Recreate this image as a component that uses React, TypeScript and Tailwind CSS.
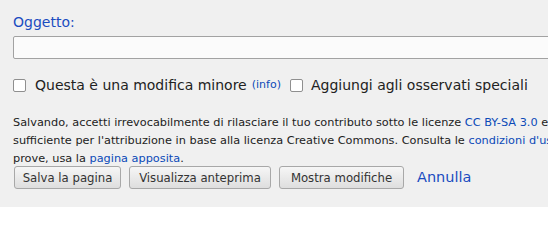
export default function App() {
  return (
    <div className="h-[207px] w-[548px] overflow-hidden bg-[#f0f0f0] pl-[13px] pt-[13px] font-['DejaVu_Sans',sans-serif] text-[#222]">
      <label className="block text-[14px] leading-[18px] text-[#1a4cc0]">Oggetto:</label>
      <div className="mt-[5px] h-[23px] w-[560px] rounded-[2px] border border-[#a2a2a2] bg-[#fbfbfb]" />

      <div className="mt-[17px] flex items-center text-[14px] leading-[18px]">
        <span className="h-[13px] w-[13px] rounded-[2px] border border-[#8f8f8f] bg-white" />
        <span className="ml-[9px]">Questa è una modifica minore</span>
        <span className="ml-[5px] text-[11px] text-[#0b4ab8]">(info)</span>
        <span className="ml-[9px] h-[13px] w-[13px] rounded-[2px] border border-[#8f8f8f] bg-white" />
        <span className="ml-[8px] whitespace-nowrap">Aggiungi agli osservati speciali</span>
      </div>

      <p className="mt-[20px] w-[600px] text-[11.3px] leading-[18px]">
        Salvando, accetti irrevocabilmente di rilasciare il tuo contributo sotto le licenze{" "}
        <span className="text-[#0b4ab8]">CC BY-SA 3.0</span> e{" "}
        <br />
        sufficiente per l'attribuzione in base alla licenza Creative Commons. Consulta le{" "}
        <span className="text-[#0b4ab8]">condizioni d'uso</span>
        <br />
        prove, usa la <span className="text-[#0b4ab8]">pagina apposita</span>.
      </p>

      <div className="-mt-[2px] ml-[1px] flex items-center font-['DejaVu_Sans_Condensed','DejaVu_Sans',sans-serif] text-[13px] font-stretch-condensed">
        <button className="h-[23px] w-[107px] rounded-[3px] border border-[#a8a8a8] bg-gradient-to-b from-[#f6f6f6] to-[#dedede] text-[#333]">
          Salva la pagina
        </button>
        <button className="ml-[8px] h-[23px] w-[142px] rounded-[3px] border border-[#a8a8a8] bg-gradient-to-b from-[#f6f6f6] to-[#dedede] text-[#333]">
          Visualizza anteprima
        </button>
        <button className="ml-[8px] h-[23px] w-[125px] rounded-[3px] border border-[#a8a8a8] bg-gradient-to-b from-[#f6f6f6] to-[#dedede] text-[#333]">
          Mostra modifiche
        </button>
        <span className="ml-[13px] font-['DejaVu_Sans',sans-serif] text-[14.5px] font-stretch-normal text-[#1a4cc0]">Annulla</span>
      </div>
    </div>
  );
}
